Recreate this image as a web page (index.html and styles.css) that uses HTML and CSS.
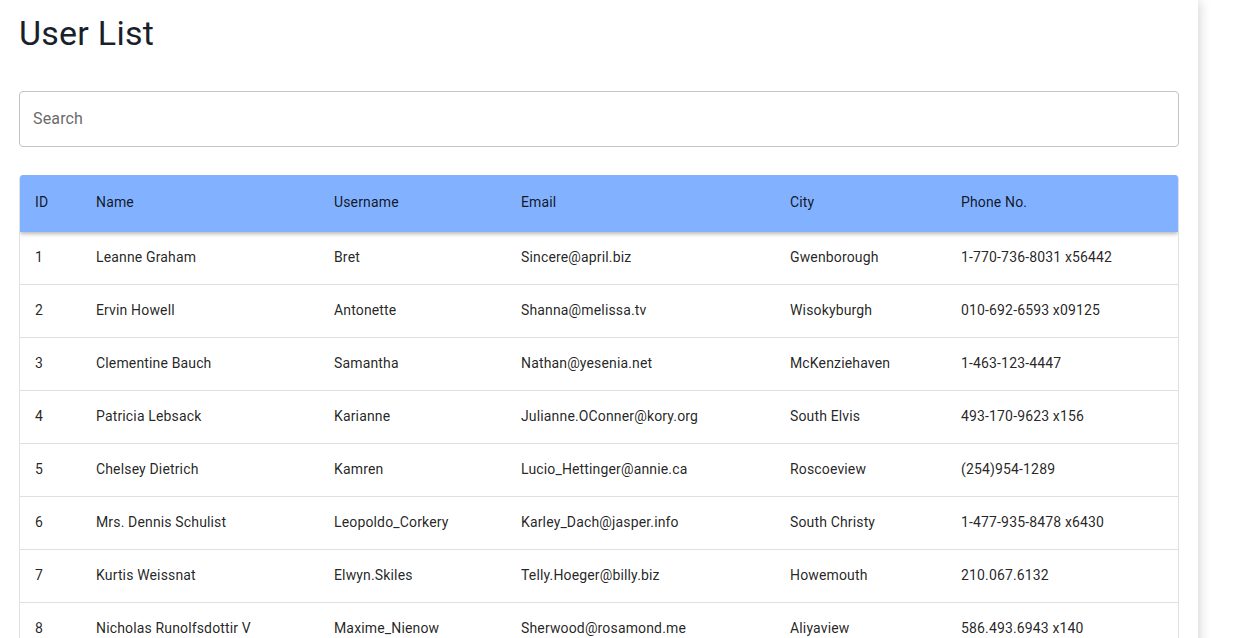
FILE: index.html
```html
<!DOCTYPE html>
<html>
<head>
<meta charset="utf-8">
<link rel="stylesheet" href="styles.css">
</head>
<body>
<div class="page">
  <h1 class="title">User List</h1>
  <div class="search"><input type="text" placeholder="Search"></div>
  <div class="table-wrap">
    <table class="users">
      <colgroup>
        <col class="c-id"><col class="c-name"><col class="c-user"><col class="c-email"><col class="c-city"><col class="c-phone">
      </colgroup>
      <thead>
        <tr><th>ID</th><th>Name</th><th>Username</th><th>Email</th><th>City</th><th>Phone No.</th></tr>
      </thead>
      <tbody>
        <tr><td>1</td><td>Leanne Graham</td><td>Bret</td><td>Sincere@april.biz</td><td>Gwenborough</td><td>1-770-736-8031 x56442</td></tr>
        <tr><td>2</td><td>Ervin Howell</td><td>Antonette</td><td>Shanna@melissa.tv</td><td>Wisokyburgh</td><td>010-692-6593 x09125</td></tr>
        <tr><td>3</td><td>Clementine Bauch</td><td>Samantha</td><td>Nathan@yesenia.net</td><td>McKenziehaven</td><td>1-463-123-4447</td></tr>
        <tr><td>4</td><td>Patricia Lebsack</td><td>Karianne</td><td>Julianne.OConner@kory.org</td><td>South Elvis</td><td>493-170-9623 x156</td></tr>
        <tr><td>5</td><td>Chelsey Dietrich</td><td>Kamren</td><td>Lucio_Hettinger@annie.ca</td><td>Roscoeview</td><td>(254)954-1289</td></tr>
        <tr><td>6</td><td>Mrs. Dennis Schulist</td><td>Leopoldo_Corkery</td><td>Karley_Dach@jasper.info</td><td>South Christy</td><td>1-477-935-8478 x6430</td></tr>
        <tr><td>7</td><td>Kurtis Weissnat</td><td>Elwyn.Skiles</td><td>Telly.Hoeger@billy.biz</td><td>Howemouth</td><td>210.067.6132</td></tr>
        <tr><td>8</td><td>Nicholas Runolfsdottir V</td><td>Maxime_Nienow</td><td>Sherwood@rosamond.me</td><td>Aliyaview</td><td>586.493.6943 x140</td></tr>
        <tr><td>9</td><td>Glenna Reichert</td><td>Delphine</td><td>Chaim_McDermott@dana.io</td><td>Bartholomebury</td><td>(775)976-6794 x41206</td></tr>
        <tr><td>10</td><td>Clementina DuBuque</td><td>Moriah.Stanton</td><td>Rey.Padberg@karina.biz</td><td>Lebsackbury</td><td>024-648-3804</td></tr>
      </tbody>
    </table>
  </div>
</div>
</body>
</html>
```

FILE: styles.css
```css
html, body {
  margin: 0;
  padding: 0;
  background: #ffffff;
  font-family: Roboto, "Liberation Sans", sans-serif;
  overflow: hidden;
}

.page {
  width: 1160px;
  min-height: 638px;
  padding: 12px 19px 0 19px;
  background: #ffffff;
  box-shadow: 0 0 12px rgba(0, 0, 0, 0.22);
}

.title {
  margin: 0;
  font-size: 34px;
  font-weight: 400;
  line-height: 42px;
  letter-spacing: 0.25px;
  color: #1a1f2b;
}

.search {
  margin-top: 37px;
}

.search input {
  box-sizing: border-box;
  width: 100%;
  height: 56px;
  border: 1px solid #c4c4c4;
  border-radius: 4px;
  padding: 0 13px 2px 13px;
  font-family: Roboto, "Liberation Sans", sans-serif;
  font-size: 16px;
  letter-spacing: 0.15px;
  color: #222;
  outline: none;
}

.search input::placeholder {
  color: #6b6b6b;
  opacity: 1;
}

.table-wrap {
  margin-top: 28px;
  border-radius: 4px 4px 0 0;
  border-left: 1px solid #e0e0e0;
  border-right: 1px solid #e0e0e0;
  overflow: hidden;
}

.users {
  width: 100%;
  border-collapse: collapse;
  table-layout: fixed;
  font-size: 14px;
  letter-spacing: 0.15px;
  color: rgba(0, 0, 0, 0.87);
}

.c-id { width: 60px; }
.c-name { width: 238px; }
.c-user { width: 187px; }
.c-email { width: 269px; }
.c-city { width: 171px; }
.c-phone { width: auto; }

.users thead tr {
  background: #82b1ff;
  box-shadow: 0 2px 4px rgba(0, 0, 0, 0.28);
  position: relative;
}

.users th {
  height: 57px;
  padding: 0 16px 3px 16px;
  box-sizing: border-box;
  text-align: left;
  font-weight: 400;
  color: rgba(0, 0, 0, 0.87);
  white-space: nowrap;
}

.users th:first-child {
  padding-left: 15px;
}

.users td {
  height: 50px;
  padding: 0 16px 2px 16px;
  border-bottom: 1px solid #e0e0e0;
  white-space: nowrap;
}

.users td:first-child {
  padding-left: 15px;
}
```
